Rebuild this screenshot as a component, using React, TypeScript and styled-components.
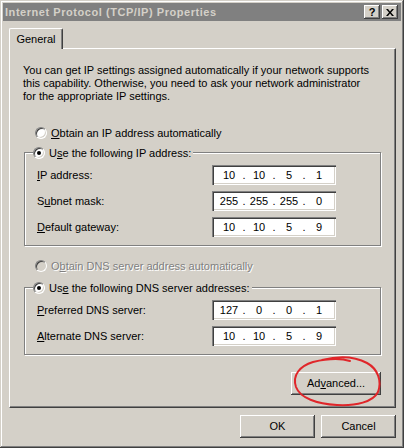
import { Fragment } from 'react';
import styled, { createGlobalStyle } from 'styled-components';

const GlobalStyle = createGlobalStyle`
  html, body {
    margin: 0;
    padding: 0;
    background: #d4d0c8;
  }
  u {
    text-underline-offset: 1px;
  }
`;

const face = `"Liberation Sans", Arial, sans-serif`;

const Window = styled.div`
  position: relative;
  box-sizing: border-box;
  width: 404px;
  height: 448px;
  padding: 3px;
  display: flex;
  flex-direction: column;
  background: #d4d0c8;
  color: #000;
  font: 11px ${face};
  box-shadow: inset -1px -1px 0 #404040, inset 1px 1px 0 #d4d0c8,
    inset -2px -2px 0 #808080, inset 2px 2px 0 #fff;
`;

const TitleBar = styled.div`
  height: 18px;
  display: flex;
  align-items: center;
  gap: 2px;
  padding: 0 3px 0 2px;
  background: #808080;
`;

const Title = styled.div`
  flex: 1;
  color: #d4d0c8;
  font-weight: bold;
  font-size: 11px;
  letter-spacing: 0.55px;
  white-space: nowrap;
`;

const CaptionButton = styled.div`
  box-sizing: border-box;
  width: 16px;
  height: 14px;
  display: flex;
  align-items: center;
  justify-content: center;
  background: #d4d0c8;
  font-weight: bold;
  font-size: 11px;
  line-height: 1;
  box-shadow: inset -1px -1px 0 #404040, inset 1px 1px 0 #fff,
    inset -2px -2px 0 #808080, inset 2px 2px 0 #d4d0c8;
`;

const Body = styled.div`
  flex: 1;
  display: flex;
  flex-direction: column;
  padding: 7px 5px 7px 6px;
`;

const TabStrip = styled.div`
  display: flex;
  position: relative;
  z-index: 1;
  margin-bottom: -1px;
`;

const Tab = styled.div`
  box-sizing: border-box;
  width: 54px;
  height: 21px;
  display: flex;
  align-items: center;
  justify-content: center;
  padding-bottom: 1px;
  background: #d4d0c8;
  border-top: 1px solid #fff;
  border-left: 1px solid #fff;
  border-right: 1px solid #404040;
  border-radius: 2px 2px 0 0;
  box-shadow: inset -1px 0 0 #808080;
`;

const Panel = styled.div`
  flex: 1;
  display: flex;
  flex-direction: column;
  padding: 15px 14px 0 14px;
  border-top: 1px solid #fff;
  border-left: 1px solid #fff;
  border-right: 1px solid #404040;
  border-bottom: 1px solid #404040;
  box-shadow: inset -1px -1px 0 #808080;
`;

const Intro = styled.p`
  margin: 0 0 0 -1px;
  line-height: 13px;
`;

const Option = styled.label<{ $top: number; $disabled?: boolean }>`
  display: flex;
  align-items: center;
  gap: 4px;
  height: 13px;
  margin-top: ${(p) => p.$top}px;
  padding-left: 11px;
  color: ${(p) => (p.$disabled ? '#808080' : '#000')};
  text-shadow: ${(p) => (p.$disabled ? '1px 1px 0 #fff' : 'none')};
`;

const Radio = styled.span<{ $checked?: boolean; $disabled?: boolean }>`
  position: relative;
  box-sizing: border-box;
  width: 12px;
  height: 12px;
  flex: none;
  border-radius: 50%;
  border: 1px solid;
  border-color: #808080 #fff #fff #808080;
  background: ${(p) => (p.$disabled ? '#d4d0c8' : '#fff')};
  box-shadow: inset 1px 1px 0 #404040, inset -1px -1px 0 #d4d0c8;

  &::after {
    content: '';
    display: ${(p) => (p.$checked ? 'block' : 'none')};
    position: absolute;
    left: 3px;
    top: 3px;
    width: 4px;
    height: 4px;
    border-radius: 50%;
    background: #000;
  }
`;

const Group = styled.div<{ $top: number }>`
  display: flex;
  flex-direction: column;
  margin-top: ${(p) => p.$top}px;
  padding: 0 44px 8px 12px;
  border: 1px solid #808080;
  box-shadow: 1px 1px 0 #fff, inset 1px 1px 0 #fff;
`;

const Legend = styled.div`
  align-self: flex-start;
  display: flex;
  align-items: center;
  gap: 4px;
  height: 13px;
  margin: -7px 0 0 -4px;
  padding: 0 2px 0 0;
  background: #d4d0c8;
`;

const Fields = styled.div`
  display: grid;
  grid-template-columns: 1fr 124px;
  grid-auto-rows: 20px;
  row-gap: 6px;
  align-items: center;
  margin-top: 6px;
`;

const FieldLabel = styled.span`
  white-space: nowrap;
`;

const IpBox = styled.div`
  box-sizing: border-box;
  height: 20px;
  display: grid;
  grid-template-columns: 24px 6px 24px 6px 24px 6px 24px;
  align-items: center;
  padding: 0 0 0 5px;
  background: #fff;
  box-shadow: inset 1px 1px 0 #808080, inset 2px 2px 0 #404040,
    inset -1px -1px 0 #fff, inset -2px -2px 0 #d4d0c8;
  text-align: center;
`;

const Push = styled.button<{ $w: number }>`
  box-sizing: border-box;
  width: ${(p) => p.$w}px;
  height: 23px;
  padding: 0 0 1px;
  border: none;
  background: #d4d0c8;
  color: #000;
  font: 11px ${face};
  box-shadow: inset -1px -1px 0 #404040, inset 1px 1px 0 #fff,
    inset -2px -2px 0 #808080, inset 2px 2px 0 #d4d0c8;
`;

const AdvancedRow = styled.div`
  display: flex;
  justify-content: flex-end;
  margin-top: 17px;
`;

const Buttons = styled.div`
  display: flex;
  justify-content: flex-end;
  gap: 6px;
  margin-top: 7px;
`;

// red pen circle drawn over the Advanced button
const Scribble = styled.svg`
  position: absolute;
  left: 0;
  top: 0;
  pointer-events: none;
`;

const IpField = ({ value }: { value: string }) => {
  const parts = value.split('.');
  return (
    <IpBox>
      {parts.map((p, i) => (
        <Fragment key={i}>
          <span>{p}</span>
          {i < 3 && <span>.</span>}
        </Fragment>
      ))}
    </IpBox>
  );
};

const ipRows = [
  { label: <><u>I</u>P address:</>, value: '10.10.5.1' },
  { label: <>S<u>u</u>bnet mask:</>, value: '255.255.255.0' },
  { label: <><u>D</u>efault gateway:</>, value: '10.10.5.9' },
];

const dnsRows = [
  { label: <><u>P</u>referred DNS server:</>, value: '127.0.0.1' },
  { label: <><u>A</u>lternate DNS server:</>, value: '10.10.5.9' },
];

export default function App() {
  return (
    <>
      <GlobalStyle />
      <Window>
        <TitleBar>
          <Title>Internet Protocol (TCP/IP) Properties</Title>
          <CaptionButton>?</CaptionButton>
          <CaptionButton>
            <svg width="8" height="7" viewBox="0 0 8 7">
              <path d="M0 0h2l2 2.5L6 0h2L5 3.5 8 7H6L4 4.5 2 7H0l3-3.5z" fill="#000" />
            </svg>
          </CaptionButton>
        </TitleBar>
        <Body>
          <TabStrip>
            <Tab>General</Tab>
          </TabStrip>
          <Panel>
            <Intro>
              You can get IP settings assigned automatically if your network supports
              <br />
              this capability. Otherwise, you need to ask your network administrator
              <br />
              for the appropriate IP settings.
            </Intro>

            <Option $top={23}>
              <Radio />
              <span><u>O</u>btain an IP address automatically</span>
            </Option>

            <Group $top={13}>
              <Legend>
                <Radio $checked />
                <span>U<u>s</u>e the following IP address:</span>
              </Legend>
              <Fields>
                {ipRows.map((r, i) => (
                  <Fragment key={i}>
                    <FieldLabel>{r.label}</FieldLabel>
                    <IpField value={r.value} />
                  </Fragment>
                ))}
              </Fields>
            </Group>

            <Option $top={13} $disabled>
              <Radio $disabled />
              <span>O<u>b</u>tain DNS server address automatically</span>
            </Option>

            <Group $top={15}>
              <Legend>
                <Radio $checked />
                <span>Us<u>e</u> the following DNS server addresses:</span>
              </Legend>
              <Fields>
                {dnsRows.map((r, i) => (
                  <Fragment key={i}>
                    <FieldLabel>{r.label}</FieldLabel>
                    <IpField value={r.value} />
                  </Fragment>
                ))}
              </Fields>
            </Group>

            <AdvancedRow>
              <Push $w={90}>Ad<u>v</u>anced...</Push>
            </AdvancedRow>
          </Panel>
          <Buttons>
            <Push $w={75}>OK</Push>
            <Push $w={75}>Cancel</Push>
          </Buttons>
        </Body>
        <Scribble width="404" height="448" viewBox="0 0 404 448">
          <path
            d="M322 360 C338 356 354 356 367 363 C378 369 382 381 378 392 C373 402 356 406 337 405 C317 404 300 398 296 387 C292 375 300 366 313 362 C326 359 340 358 350 361"
            fill="none"
            stroke="#e0262a"
            strokeWidth="2"
            strokeLinecap="round"
          />
        </Scribble>
      </Window>
    </>
  );
}
